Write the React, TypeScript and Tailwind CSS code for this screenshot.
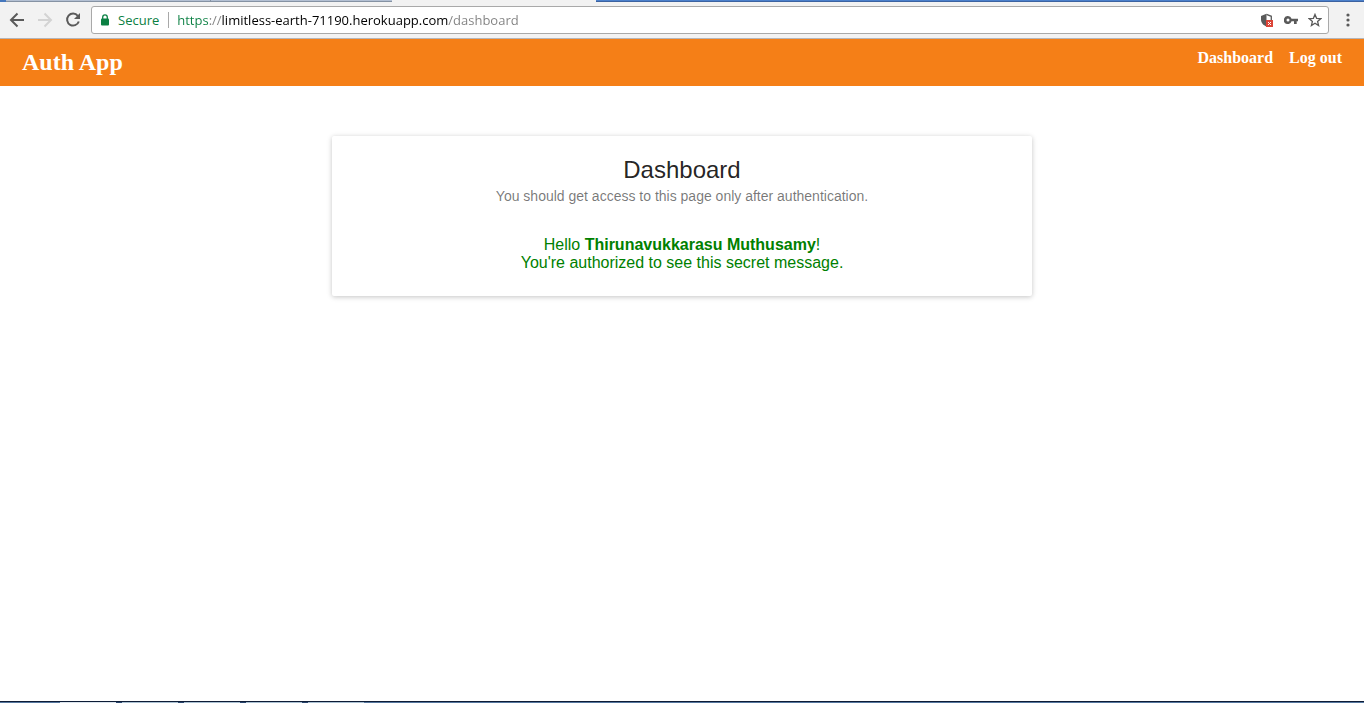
import { useState } from "react";

function BackIcon() {
  return (
    <svg width="16" height="16" viewBox="0 0 16 16" fill="none" stroke="currentColor" strokeWidth="2" aria-hidden="true">
      <path d="M15 8H2.5M8.5 1.5L2 8l6.5 6.5" />
    </svg>
  );
}

function ForwardIcon() {
  return (
    <svg width="16" height="16" viewBox="0 0 16 16" fill="none" stroke="currentColor" strokeWidth="2" aria-hidden="true">
      <path d="M1 8h12.5M7.5 1.5L14 8l-6.5 6.5" />
    </svg>
  );
}

function ReloadIcon() {
  return (
    <svg width="16" height="16" viewBox="0 0 16 16" fill="none" aria-hidden="true">
      <path d="M12.8 3.8A6 6 0 1 0 13.8 9.5" stroke="currentColor" strokeWidth="2" />
      <path d="M15 1v6H9z" fill="currentColor" />
    </svg>
  );
}

function LockIcon() {
  return (
    <svg width="10" height="12" viewBox="0 0 10 12" fill="none" aria-hidden="true">
      <rect x="1" y="4.5" width="8" height="7" rx="1" fill="#0b8043" />
      <path d="M2.7 5V3.2a2.3 2.3 0 0 1 4.6 0V5" stroke="#0b8043" strokeWidth="1.3" />
    </svg>
  );
}

function ShieldIcon() {
  return (
    <svg width="14" height="15" viewBox="0 0 14 15" fill="none" aria-hidden="true">
      <path d="M6.5.8L1 3v3.6c0 3.3 2.2 5.9 5.5 6.9z" fill="#5a5a5a" />
      <path d="M6.5 1.4L11.3 3.3V7" stroke="#5a5a5a" strokeWidth="1.3" />
      <rect x="6" y="7" width="7" height="7" fill="#db4437" />
      <path d="M8 9l3 3M11 9l-3 3" stroke="#fff" />
    </svg>
  );
}

function KeyIcon() {
  return (
    <svg width="14" height="8" viewBox="0 0 14 8" aria-hidden="true">
      <path
        d="M4 0a4 4 0 1 0 3.6 5.3H10V8h2.7V5.3H14V2.7H7.6A4 4 0 0 0 4 0zm0 2.5a1.5 1.5 0 1 1 0 3 1.5 1.5 0 0 1 0-3z"
        fill="#5a5a5a"
        fillRule="evenodd"
      />
    </svg>
  );
}

function StarIcon() {
  return (
    <svg width="14" height="14" viewBox="0 0 14 14" fill="none" aria-hidden="true">
      <path
        d="M7 1.4l1.6 3.9 4.2.3-3.2 2.8 1 4.1L7 10.3l-3.6 2.2 1-4.1L1.2 5.6l4.2-.3z"
        stroke="#5a5a5a"
        strokeWidth="1.3"
      />
    </svg>
  );
}

function MenuIcon() {
  return (
    <svg width="4" height="14" viewBox="0 0 4 14" fill="#5a5a5a" aria-hidden="true">
      <circle cx="2" cy="2" r="1.6" />
      <circle cx="2" cy="7" r="1.6" />
      <circle cx="2" cy="12" r="1.6" />
    </svg>
  );
}

function TabStrip() {
  return (
    <div className="flex h-[2px] bg-[#4577bd]" aria-hidden="true">
      <div className="w-[6px]" />
      <div className="w-[204px] border-b border-[#8592a3] bg-[#b3c0d3]" />
      <div className="w-[182px] border-b border-l border-[#8592a3] bg-[#b3c0d3]" />
      <div className="w-[204px] bg-[#f2f2f2]" />
      <div className="flex-1 border-b border-[#3c62a0] bg-[#4b80cb]" />
    </div>
  );
}

function BrowserBar() {
  const [url, setUrl] = useState("https://limitless-earth-71190.herokuapp.com/dashboard");
  return (
    <div className="flex h-[37px] items-center gap-3 border-b border-[#b6b4b6] bg-[#f2f2f2] pr-[14px] pl-[9px] font-['Open_Sans',sans-serif]">
      <button type="button" aria-label="Back" className="text-[#5a5a5a]">
        <BackIcon />
      </button>
      <button type="button" aria-label="Forward" disabled className="text-[#d3d3d3]">
        <ForwardIcon />
      </button>
      <button type="button" aria-label="Reload" className="text-[#5a5a5a]">
        <ReloadIcon />
      </button>
      <div className="-ml-[2px] flex h-7 flex-1 items-center rounded-[3px] border border-[#a9a9a9] bg-white pr-[6px] pl-2">
        <LockIcon />
        <label htmlFor="address" className="ml-2 text-[13px] leading-5 text-[#0b8043]">
          Secure
        </label>
        <div className="mr-2 ml-[9px] h-4 w-px bg-[#a9a9a9]" />
        <input
          id="address"
          type="text"
          spellCheck={false}
          value={url}
          onChange={(event) => setUrl(event.target.value)}
          className="h-5 min-w-0 flex-1 bg-[linear-gradient(to_right,#0b8043_31px,#808080_31px,#808080_45px,#000_45px,#000_271px,#808080_271px)] bg-clip-text text-[13px] leading-5 text-transparent caret-black outline-none"
        />
        <div className="flex items-center gap-[10px]">
          <button type="button" aria-label="Blocked content">
            <ShieldIcon />
          </button>
          <button type="button" aria-label="Saved passwords">
            <KeyIcon />
          </button>
          <button type="button" aria-label="Bookmark this page">
            <StarIcon />
          </button>
        </div>
      </div>
      <button type="button" aria-label="Menu" className="ml-[5px]">
        <MenuIcon />
      </button>
    </div>
  );
}

function SiteHeader() {
  return (
    <header className="flex items-start justify-between bg-[#f57f17] px-[22px] pt-[9px] pb-[10px] font-['Liberation_Serif',serif] font-bold text-white">
      <a href="/" className="text-2xl leading-7">
        Auth App
      </a>
      <nav className="flex gap-4 text-base leading-5">
        <a href="/dashboard">Dashboard</a>
        <a href="/logout">Log out</a>
      </nav>
    </header>
  );
}

function DashboardCard() {
  return (
    <section className="mx-auto mt-[50px] w-full max-w-[700px] rounded-[2px] bg-white p-4 pb-6 text-center shadow-[0_1px_6px_rgba(0,0,0,0.12),0_1px_4px_rgba(0,0,0,0.12)]">
      <h1 className="text-2xl leading-9 text-black/87">Dashboard</h1>
      <p className="text-sm leading-4 text-black/54">You should get access to this page only after authentication.</p>
      <p className="mt-8 text-base leading-[18px] text-[#008000]">
        Hello <strong>Thirunavukkarasu Muthusamy</strong>!<br />
        You're authorized to see this secret message.
      </p>
    </section>
  );
}

function Taskbar() {
  return (
    <div className="flex h-[2px] border-t border-[#0d1c36] bg-[#55779f]" aria-hidden="true">
      <div className="w-[60px]" />
      <div className="w-[56px] bg-[#dbe5ee]" />
      <div className="w-[6px] bg-[#28456e]" />
      <div className="w-[56px] bg-[#a9c0d2]" />
      <div className="w-[6px] bg-[#28456e]" />
      <div className="w-[56px] bg-[#a9c0d2]" />
      <div className="w-[6px] bg-[#28456e]" />
      <div className="w-[56px] bg-[#a9c0d2]" />
      <div className="w-[6px] bg-[#28456e]" />
      <div className="w-[56px] bg-[#a9c0d2]" />
    </div>
  );
}

export default function App() {
  return (
    <div className="flex min-h-screen flex-col bg-white font-['Liberation_Sans',sans-serif]">
      <TabStrip />
      <BrowserBar />
      <SiteHeader />
      <main className="flex-1">
        <DashboardCard />
      </main>
      <Taskbar />
    </div>
  );
}
